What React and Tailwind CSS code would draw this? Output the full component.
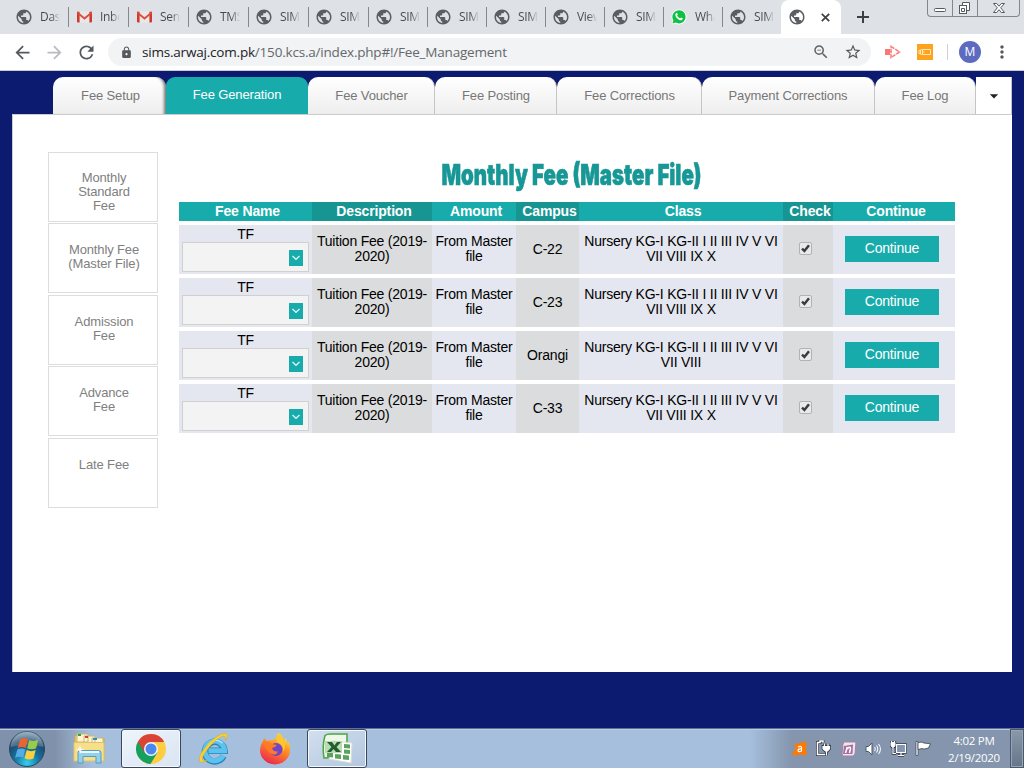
import React from "react";
import {
  MdPublic, MdArrowBack, MdArrowForward, MdRefresh, MdLock, MdZoomOut,
  MdStarBorder, MdMoreVert, MdArrowDropDown,
} from "react-icons/md";

const UI = "font-['Open_Sans','Noto_Sans',sans-serif]";

function Gmail() {
  return (
    <svg width="15" height="12" viewBox="0 0 15 12" className="shrink-0">
      <path d="M1 .5h13v11H1z" fill="#e8e8e8" />
      <path d="M0 .8h2.6v10.7H1a1 1 0 0 1-1-1zM12.4.8H15v9.7a1 1 0 0 1-1 1h-1.6z" fill="#d2392d" />
      <path d="M.4.4 7.5 6.2 14.6.4 15 2.5 7.5 8.8 0 2.5z" fill="#dd4b3e" />
    </svg>
  );
}

function WhatsApp() {
  return (
    <svg width="16" height="16" viewBox="0 0 16 16">
      <path d="M.5 15.5 1.6 11.6A7.5 7.5 0 1 1 4.4 14.4z" fill="#fff" />
      <path d="M1.5 14.5 2.4 11.4A6.6 6.6 0 1 1 4.7 13.6z" fill="#0fc143" />
      <path d="M5.1 4.2c.6-.6 1-.4 1.3.4l.4 1-.7 1c.6 1.4 1.7 2.3 3 2.8l.9-.9 1.7.8c.4.6-.5 2-1.6 2-2.8 0-6-3.400-5.700-5.800.1-.6.4-1 .7-1.300z" fill="#fff" />
    </svg>
  );
}

const browserTabs = [
  ["globe", "Das"], ["gmail", "Inbo"], ["gmail", "Sen"], ["globe", "TMS"], ["globe", "SIM"], ["globe", "SIM"],
  ["globe", "SIM"], ["globe", "SIM"], ["globe", "SIM"], ["globe", "View"], ["globe", "SIM"], ["wa", "Wha"], ["globe", "SIM"],
];

function BrowserTab({ kind, title, index }) {
  const width = index === 0 ? "w-[69px] pl-[16px]" : index < 6 ? "w-[60px] pl-[7px]" : index < 12 ? "w-[59px] pl-[7px]" : "w-[58px] pl-[7px]";
  const edge = index < 12 ? "border-r border-[#85888d]" : "";
  return (
    <div className={`flex h-5 shrink-0 items-center ${width} ${edge}`}>
      <span className="flex w-4 shrink-0 justify-center">
        {kind === "globe" && <MdPublic size={18} color="#5a5d61" className="shrink-0" />}
        {kind === "gmail" && <Gmail />}
        {kind === "wa" && <WhatsApp />}
      </span>
      <span className={`ml-[8px] w-[20px] overflow-hidden whitespace-nowrap bg-linear-to-r from-[#45484d] from-55% to-[#dee1e6] bg-clip-text text-[12px] leading-5 tracking-[-0.3px] text-transparent ${UI}`}>{title}</span>
    </div>
  );
}

function WindowControls() {
  return (
    <div className="ml-auto mr-[4px] flex h-[17px] w-[93px] self-start rounded-b-[4px] border border-t-0 border-[#83868b]">
      <svg width="91" height="16" viewBox="0 0 91 16" fill="none" stroke="#56595e">
        <path d="M24.500 0v16M49.500 0v16" stroke="#83868b" />
        <rect x="6.500" y="8.500" width="11" height="3" rx="1" fill="#fff" />
        <path d="M34.500 2.500h7v8h-7z" fill="#fff" />
        <rect x="31.500" y="5.500" width="7" height="8" fill="#fff" />
        <path d="M33.500 8.500h3v3h-3z" />
        <path d="M65.500 3.500h3.200l2.300 2.700 2.300-2.700h3.200l-3.800 4.300 3.800 4.700h-3.200L71 9.700l-2.300 2.800h-3.200l3.800-4.700z" fill="#fff" />
      </svg>
    </div>
  );
}

function TabStrip() {
  return (
    <div className="flex h-[34px] items-center bg-[#dee1e6]">
      {browserTabs.map(([k, t], i) => <BrowserTab key={i} kind={k} title={t} index={i} />)}
      <div className="flex h-[34px] w-[60px] shrink-0 items-center rounded-t-[8px] bg-white pl-[7px]">
        <MdPublic size={18} color="#5a5d61" className="shrink-0" />
        <svg className="ml-[15px] shrink-0" width="9" height="9" viewBox="0 0 9 9"><path d="m.8.8 7.400 7.400M8.200.8.8 8.200" stroke="#3c4043" strokeWidth="1.700" /></svg>
      </div>
      <svg className="ml-[16px] shrink-0" width="12" height="12" viewBox="0 0 12 12"><path d="M6 0v12M0 6h12" stroke="#3c4043" strokeWidth="2" /></svg>
      <WindowControls />
    </div>
  );
}

function Toolbar() {
  return (
    <div className="flex h-[37px] items-center border-b border-[#c9ccd1] bg-white">
      <MdArrowBack size={21} color="#55585d" className="ml-[12px] shrink-0" />
      <MdArrowForward size={21} color="#b9bbbe" className="ml-[11px] shrink-0" />
      <MdRefresh size={21} color="#55585d" className="ml-[11px] shrink-0" />
      <div className="ml-[11px] flex h-[28px] w-[763px] shrink-0 items-center rounded-full bg-[#f1f3f4]">
        <MdLock size={13} color="#55585d" className="ml-[12px] shrink-0" />
        <span className={`ml-[9px] whitespace-nowrap text-[13.500px] tracking-[-0.2px] text-[#65686c] ${UI}`}>
          <span className="text-[#202124]">sims.arwaj.com.pk</span>/150.kcs.a/index.php#!/Fee_Management
        </span>
        <MdZoomOut size={18} color="#5f6368" className="ml-auto shrink-0" />
        <MdStarBorder size={18} color="#55585d" className="ml-[14px] mr-[9px] shrink-0" />
      </div>
      <svg className="ml-[14px] shrink-0" width="17" height="14" viewBox="0 0 17 14">
        <path d="M0 4h5v6H0z" fill="#ff7575" />
        <path d="M6 1.500 14.500 7 6 12.500zM5 7h2" fill="none" stroke="#ff7b7b" strokeWidth="1.500" strokeDasharray="4 1" />
      </svg>
      <svg className="ml-[15px] shrink-0" width="16" height="16" viewBox="0 0 16 16">
        <path d="M0 0h16v16H0z" fill="#fda31c" />
        <path d="M5.500 5.500h8v5h-8zM5.500 5.500 2 6.500v3l3.500 1M3.500 6v4M6 8h1.500" fill="none" stroke="#ffe6bd" />
      </svg>
      <div className="ml-[14px] h-4 w-px bg-[#cfd1d4]" />
      <div className={`ml-[11px] flex size-[22px] shrink-0 items-center justify-center rounded-full bg-[#5c6bc0] text-[12px] text-white ${UI}`}>M</div>
      <MdMoreVert size={20} color="#55585d" className="ml-[11px] shrink-0" />
    </div>
  );
}

const pageTabs = [
  ["Fee Setup", "w-[113px] border-r-0 pl-[2px] shadow-[inset_-4px_0_3px_-2px_#777]"],
  ["Fee Generation", ""],
  ["Fee Voucher", "w-[127px] pl-[1px]"],
  ["Fee Posting", "w-[122px] pl-[1px]"],
  ["Fee Corrections", "w-[145px] pl-[1px]"],
  ["Payment Corrections", "w-[173px]"],
  ["Fee Log", "w-[101px]"],
];

function PageTabs() {
  return (
    <div className="mt-[6px] flex h-[37px] pl-[53px] text-[13px] tracking-[-0.13px]">
      {pageTabs.map(([t, cls]) =>
        t === "Fee Generation" ? (
          <div key={t} className="flex w-[142px] shrink-0 items-center justify-center rounded-t-[9px] bg-[#18abab] pb-[2px] text-white">{t}</div>
        ) : (
          <div key={t} className={`flex shrink-0 items-center justify-center rounded-t-[10px] border-r border-[#c5c5c5] bg-linear-to-b from-white to-[#eee] text-[#777] ${cls}`}>{t}</div>
        )
      )}
      <div className="flex w-[36px] shrink-0 items-center justify-center border-r border-[#c5c5c5] bg-white">
        <MdArrowDropDown size={20} color="#222" />
      </div>
    </div>
  );
}

const sideItems = [
  [["Monthly", "Standard", "Fee"], "mt-0 pt-[18px]"],
  [["Monthly Fee", "(Master File)"], "mt-[1px] pt-[19px]"],
  [["Admission", "Fee"], "mt-[2px] pt-[19px]"],
  [["Advance", "Fee"], "mt-[1px] pt-[19px]"],
  [["Late Fee"], "mt-[2px] pt-[19px]"],
];

function Sidebar() {
  return (
    <nav className="mt-[37px] w-[110px] shrink-0 text-center text-[13px] leading-[14px] tracking-[-0.13px] text-[#808080]">
      {sideItems.map(([lines, gap], i) => (
        <div key={i} className={`h-[70px] border border-[#ddd] pl-[2px] ${gap}`}>
          {lines.map((l) => <div key={l}>{l}</div>)}
        </div>
      ))}
    </nav>
  );
}

const rows = [
  ["C-22", "VII VIII IX X"],
  ["C-23", "VII VIII IX X"],
  ["Orangi", "VII VIII"],
  ["C-33", "VII VIII IX X"],
];
const COLS = "grid grid-cols-[133px_120px_84px_63px_204px_50px_122px]";
const headers = ["Fee Name", "Description", "Amount", "Campus", "Class", "Check", "Continue"];

function FeeRow({ campus, classes }) {
  return (
    <div className={`${COLS} mt-[4px] h-[49px] bg-[#e4e7ef] text-center text-[14px] leading-[15px] tracking-[-0.21px] text-black`}>
      <div className="px-[3px] pt-[2px]">
        <div>TF</div>
        <div className="flex h-[30px] items-center justify-end border border-[#d0d0d0] bg-[#f3f3f3] pr-[5px] pt-[2px]">
          <div className="flex h-4 w-[14px] items-center justify-center bg-[#18abab]">
            <svg width="10" height="6" viewBox="0 0 10 6"><path d="M1.500 1 5 4.300 8.500 1" fill="none" stroke="#d9f3f3" strokeWidth="1.300" /></svg>
          </div>
        </div>
      </div>
      <div className="bg-[#dbdcdd] pt-[9px]"><div>Tuition Fee (2019-</div><div>2020)</div></div>
      <div className="whitespace-nowrap pt-[9px]"><div>From Master</div><div>file</div></div>
      <div className="flex items-center justify-center bg-[#dbdcdd]">{campus}</div>
      <div className="whitespace-nowrap pt-[9px]"><div>Nursery KG-I KG-II I II III IV V VI</div><div>{classes}</div></div>
      <div className="flex items-center justify-center bg-[#dbdcdd] pb-[2px] pr-[6px]">
        <svg width="13" height="13" viewBox="0 0 13 13">
          <rect x=".5" y=".5" width="12" height="12" rx="1.500" fill="#eaeaea" stroke="#b2b2b2" />
          <path d="M3 6.700 5.400 9 10 3.300" fill="none" stroke="#3c3c3c" strokeWidth="2.500" />
        </svg>
      </div>
      <div className="pl-[12px] pt-[11px]">
        <button className="flex h-[26px] w-[94px] items-center justify-center bg-[#18abab] pb-[1px] text-white">Continue</button>
      </div>
    </div>
  );
}

function FeeTable() {
  return (
    <section className="ml-[21px] w-[776px]">
      <h1 className="mt-[41px] flex h-[38px] items-center justify-center pl-[9px]">
        <span className="scale-x-[0.705] whitespace-nowrap font-['Inter',sans-serif] text-[29px] font-black text-[#179795] [-webkit-text-stroke:0.6px_#179795]">Monthly Fee (Master File)</span>
      </h1>
      <div className={`${COLS} mt-[8px] h-[19px] text-center text-[14px] font-bold leading-[19px] tracking-[-0.15px] text-white`}>
        {headers.map((h, i) => (
          <div key={h} className={`pl-[4px] ${[1, 3, 5].includes(i) ? "bg-[#169593]" : "bg-[#18abab]"}`}>{h}</div>
        ))}
      </div>
      {rows.map(([c, k]) => <FeeRow key={c} campus={c} classes={k} />)}
    </section>
  );
}

function StartOrb() {
  return (
    <svg width="38" height="38" viewBox="0 0 38 38">
      <defs>
        <radialGradient id="orb" cx=".5" cy=".9" r=".9"><stop offset="0" stopColor="#35d0ef" /><stop offset=".4" stopColor="#15739f" /><stop offset=".7" stopColor="#1f4c70" /><stop offset="1" stopColor="#8da7bb" /></radialGradient>
      </defs>
      <circle cx="19" cy="19" r="17.500" fill="url(#orb)" stroke="#274760" />
      <path d="M3 17a16 16 0 0 1 32 0q-16-5-32 0z" fill="#fff" opacity=".2" />
      <path d="M12 9.500q4-2.300 8-.2l-2.200 8.700q-4-2-8 0z" fill="#ed6330" />
      <path d="M21.300 10q4.200 2.200 9-.6l-2.200 8.800q-4.600 2.300-9 0z" fill="#98cc48" />
      <path d="M9.300 19.500q4-2.200 8 0l-2.200 8.300q-4-2-8 .2z" fill="#56abe3" />
      <path d="M18.700 20q4.500 2.300 9 0l-2.200 8.500q-4.600 2.300-9-.2z" fill="#fccf3c" />
    </svg>
  );
}

function Explorer() {
  return (
    <svg width="34" height="32" viewBox="0 0 34 32">
      <path d="M3 2.500h10l1 3h18v22H2z" fill="#ebce72" stroke="#c8a74d" />
      <path d="M5 1h11v8H5zM12 3h11v8H12zM20 5h11v6H20z" fill="#fff5ce" stroke="#c8b577" />
      <path d="M6 1h3v2H6z" fill="#21a637" /><path d="M13 3h3v2h-3z" fill="#d33f32" /><path d="M21 5h4v2h-4z" fill="#318dc6" />
      <path d="M2 9.500h30V28H2z" fill="#f6df8b" stroke="#dfc36a" />
      <path d="M6 30V19.500q0-2 3-2h17q3 0 3 2V30h-5v-6.500H11V30z" fill="#94d0ec" stroke="#549dc1" />
      <path d="M8 19h19" stroke="#e4faff" strokeWidth="2" />
      <path d="m8 12 1 3.500 3.500 1-3.500 1L8 21l-1-3.500-3.500-1 3.500-1z" fill="#fff" opacity=".8" />
    </svg>
  );
}

function Chrome() {
  return (
    <svg width="30" height="30" viewBox="0 0 30 30">
      <circle cx="15" cy="15" r="15" fill="#ffcd40" />
      <path d="M15 15 2 7.500A15 15 0 0 0 14.500 30L21.500 18.500z" fill="#16a05e" />
      <path d="M2 7.500A15 15 0 0 1 28.200 8H15v7l-6.500 3.500z" fill="#da4437" />
      <circle cx="15" cy="15" r="7" fill="#f3f4f4" /><circle cx="15" cy="15" r="5.500" fill="#4b87ee" />
    </svg>
  );
}

function InternetExplorer() {
  return (
    <svg width="34" height="34" viewBox="0 0 34 34" fill="none">
      <path d="M11 18.800H27.500A9.800 9.800 0 1 0 26.500 24" stroke="#2387bd" strokeWidth="6.500" />
      <path d="M11.500 18.800H27.500A9.800 9.800 0 1 0 26.200 23.800" stroke="#5fc2ee" strokeWidth="5" />
      <path d="M9.500 16Q11 10.500 15.500 9q6-2 10 2" stroke="#b8effc" strokeWidth="1.300" />
      <path d="M28.500 9Q32 2 28.500 1.500 23 .5 12 11 1 23 2.500 29q1 3 8-1-4 1.500-5 0Q4 24 14 13 24 3 27.500 4q1.500 1 1 5z" fill="#f9d133" stroke="#dda41d" strokeWidth=".5" />
    </svg>
  );
}

function Firefox() {
  return (
    <svg width="32" height="32" viewBox="0 0 32 32">
      <defs><linearGradient id="fox" x1=".8" y1="0" x2=".3" y2="1"><stop offset="0" stopColor="#fff34c" /><stop offset=".4" stopColor="#ff9422" /><stop offset="1" stopColor="#ed254f" /></linearGradient></defs>
      <path d="M20 0q4 3 5 8l2-3q1 3 1 5l2-1q1 4 1 8a15 14.500 0 0 1-30 0Q1 12 4 8l1-3 3 3q2-1 4-.5l5-2Q17 2 20 0z" fill="url(#fox)" />
      <circle cx="17" cy="16.500" r="6.500" fill="#7045ca" />
      <path d="M4 9q6-1 9 2l5 1q-2 3-5 3 1 4 6 3.500-2 5-7 2-5-3-8-11.500z" fill="#ff7a27" />
      <path d="M18 9q7 2 6 10 4-6 0-12 0-4-4-7-3 3-2 9z" fill="#ffc62d" />
    </svg>
  );
}

function Excel() {
  return (
    <svg width="33" height="32" viewBox="0 0 33 32">
      <path d="M4 2.500Q6 1 9 1h17v23L3 25q-2-12 1-22.500z" fill="#eef7e9" stroke="#4aa641" strokeWidth="1.500" />
      <path d="m12 8 19 2-1 20-22-4z" fill="#fff" stroke="#d7e2d0" />
      <path d="m23 11 6 .5v4l-6-.5zm0 5.500 6 .5v4l-6-.5zM6 20h6v4.500l-6-.5zm8 1 6 .5V26l-6-.5zm8 1 6 .5V27l-6-.5z" fill="#5ba25f" />
      <path d="M4 8h17v12H4z" fill="#b9ddae" />
      <path d="M6 9h5l2.500 3.500L16 9h4l-4.500 5L20 19h-5l-2.500-3L10 19H6l4.500-5z" fill="#245c35" />
    </svg>
  );
}

function Tray() {
  return (
    <div className="flex items-center">
      <svg width="16" height="16" viewBox="0 0 16 16">
        <path d="m3 2.500 4 0L13.500.3 15 3l-1.500 4 1.500 5.500-2.500 3L10 13l-4 1-5 .8-.5-2L3 9z" fill="#ff7800" />
        <path d="M6 6q3-1.500 3.500.5v4M9.500 8Q6 7.500 6 9.500T9.500 10" fill="none" stroke="#fff" strokeWidth="1.200" />
      </svg>
      <svg className="ml-[8px]" width="16" height="17" viewBox="0 0 16 17" fill="none" stroke="#fff">
        <path d="M7 2.500V1H4v1.500H1.500v12H10" stroke="#333c49" strokeWidth="3" /><path d="M7 2.500V1H4v1.500H1.500v12H10" strokeWidth="1.500" />
        <path d="M7 6.500h6.500v2.200L11.500 11h-2L7 8.700zM8.500 3.500v3M12 3.500v3M10.500 11v4.500" stroke="#333c49" strokeWidth="2.800" />
        <path d="M7 6.500h6.500v2.200L11.500 11h-2L7 8.700zM8.500 3.500v3M12 3.500v3M10.500 11v4.500" strokeWidth="1.200" fill="#fff" />
      </svg>
      <svg className="ml-[9px]" width="16" height="16" viewBox="0 0 16 16">
        <path d="M3 1h12l-1 12-2 2H2l-1-2 1-10z" fill="#f0e4ef" stroke="#a481a0" /><path d="m3 5 9-1.500-.5 9.500H2z" fill="#a5709f" />
        <path d="m4.500 12 1.500-5 .5.500q3-2.500 3 0l-1 4.500" fill="none" stroke="#fff" strokeWidth="1.500" />
      </svg>
      <svg className="ml-[8px]" width="17" height="16" viewBox="0 0 17 16" fill="none">
        <path d="M1 5.500h2.500L7 2v12L3.500 10.500H1z" fill="#fff" stroke="#4d596a" />
        <path d="M9.500 6q1.500 2 0 4M11.500 4.500q2.500 3.500 0 7M13.500 3q4 5 0 10" stroke="#eef2f6" strokeWidth="1.100" />
      </svg>
      <svg className="ml-[8px]" width="17" height="17" viewBox="0 0 17 17" fill="none">
        <path d="M6.500 4.500h9v8h-9zM8 15.500h6M11 13v2M1 2.500h4v3l-1 1.500H2L1 5.500zM3 7v6.500h3" stroke="#303b49" strokeWidth="2.400" />
        <path d="M6.500 4.500h9v8h-9z" fill="#8495ad" />
        <path d="M6.500 4.500h9v8h-9zM8 15.500h6M11 13v2M3 7v6.500h3" stroke="#fff" strokeWidth="1.200" />
        <path d="M1 2.500h4v3l-1 1.500H2L1 5.500zM1.500 1v2M4.500 1v2" fill="#fff" stroke="#fff" />
      </svg>
      <svg className="ml-[8px]" width="17" height="17" viewBox="0 0 17 17">
        <path d="M1 1.500h2v14H1z" fill="#fff" stroke="#39434f" strokeWidth=".7" />
        <path d="M3 2.500q4-1 6 .5l6.500.8-2 4.200-4 1Q7 8 3 9.500z" fill="#fff" stroke="#39434f" strokeWidth=".8" />
      </svg>
    </div>
  );
}

function Taskbar() {
  const pinned = "flex h-[39px] shrink-0 items-center justify-center";
  const open = "rounded-[3px] border border-[#38475d] bg-linear-to-br shadow-[inset_0_0_0_1px_#f4f8fd]";
  return (
    <footer className={`flex h-[40px] items-center border-t border-[#5c7193] bg-[linear-gradient(to_right,#8092ab_0,#8092ab_55px,#a6bfdd_92px,#a6bfdd_750px,#8495ad_792px,#8495ad_100%)] shadow-[inset_0_1px_0_#b9cce3] ${UI}`}>
      <div className="ml-[8px] flex w-[38px] shrink-0"><StartOrb /></div>
      <div className={`${pinned} ml-[14px] w-[58px]`}><Explorer /></div>
      <div className={`${pinned} ${open} ml-[3px] w-[60px] from-[#eef4fb] to-[#d9e5f2]`}><Chrome /></div>
      <div className={`${pinned} ml-[3px] w-[60px]`}><InternetExplorer /></div>
      <div className={`${pinned} ml-[2px] w-[58px]`}><Firefox /></div>
      <div className={`${pinned} ${open} ml-[3px] w-[60px] from-[#d2dfef] to-[#b2c6df]`}><Excel /></div>
      <div className="ml-auto mr-[16px]"><Tray /></div>
      <div className="mr-[10px] w-[52px] shrink-0 whitespace-nowrap text-center text-[11.500px] leading-[17px] tracking-[-0.3px] text-white">
        <div>4:02 PM</div><div>2/19/2020</div>
      </div>
      <div className="h-[39px] w-[14px] shrink-0 border border-[#4a586c] bg-linear-to-b from-[#8c98aa] to-[#66758a] shadow-[inset_0_0_0_1px_#97a4b6]" />
    </footer>
  );
}

export default function App() {
  return (
    <div className="flex h-[768px] w-[1024px] flex-col overflow-hidden bg-[#0c1b70] font-['Liberation_Sans',Arial,sans-serif]">
      <TabStrip />
      <Toolbar />
      <PageTabs />
      <main className="ml-[12px] flex h-[558px] w-[1000px] shrink-0 border-l border-t border-[#ccc] bg-white pl-[35px]">
        <Sidebar />
        <FeeTable />
      </main>
      <div className="flex-1" />
      <Taskbar />
    </div>
  );
}
